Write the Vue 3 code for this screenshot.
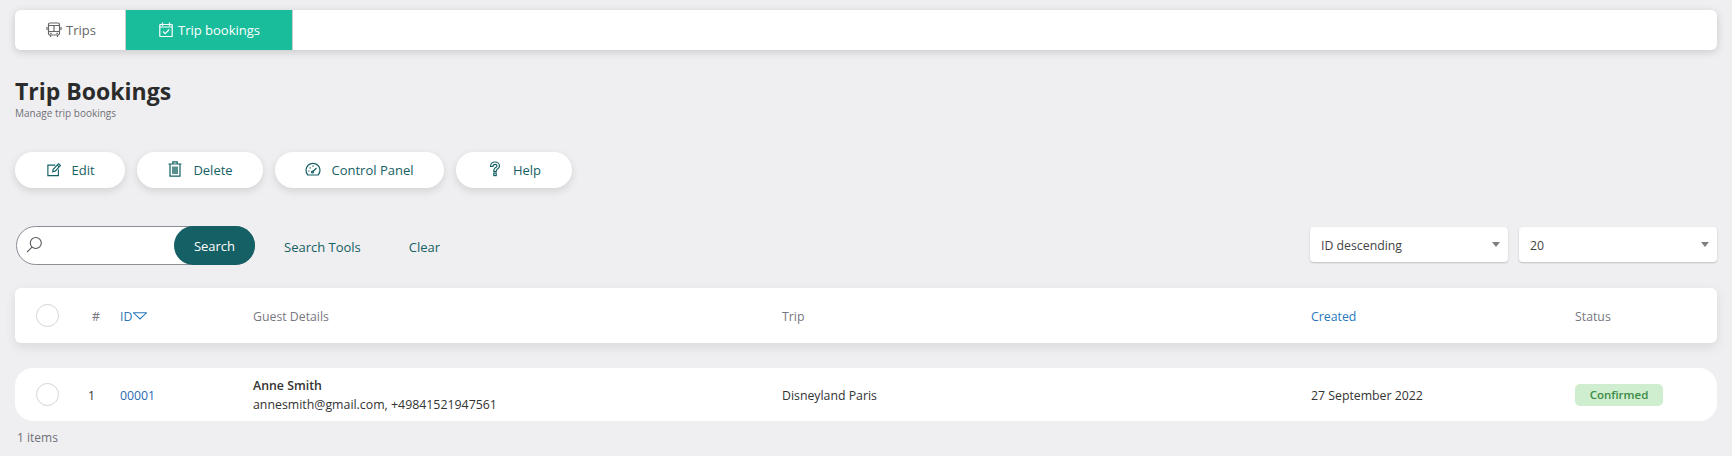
<script setup>
const headers = ['Guest Details', 'Trip']
</script>

<template>
  <div class="page">
    <nav class="tabs">
      <a class="tab tab-trips">
        <svg class="ico" viewBox="0 0 16 16" fill="none" stroke="currentColor" stroke-width="1.2">
          <rect x="2.500" y="1" width="11" height="12" rx="1.500"/>
          <path d="M2.500 3.500h11M2.500 9.500h11M8 3.500v6M1 5v3M15 5v3M4.500 13v2M11.500 13v2"/>
          <path d="M4.200 11.300h1.400M10.400 11.300h1.400"/>
        </svg>
        <span>Trips</span>
      </a>
      <a class="tab tab-active">
        <svg class="ico" viewBox="0 0 16 16" fill="none" stroke="currentColor" stroke-width="1.2">
          <rect x="1.800" y="2.500" width="12.400" height="12" rx="0.600"/>
          <path d="M4.500 0.500v3.500M11.500 0.500v3.500M1.800 5h12.400"/>
          <path d="M5 9.500l2.200 2.200 4-4.200"/>
        </svg>
        <span>Trip bookings</span>
      </a>
    </nav>

    <header class="title">
      <h1>Trip Bookings</h1>
      <p>Manage trip bookings</p>
    </header>

    <div class="actions">
      <button class="pill pill-edit">
        <svg class="ico ico-edit" viewBox="0 0 16 16" fill="none" stroke="currentColor" stroke-width="1.300">
          <path d="M9.500 2.500H1v12h12V7.500"/>
          <path d="M6.500 10l.6-2.800L13.200.8l2.100 2.100-6 6.400z"/>
          <path d="M11.800 2.400l2 2"/>
        </svg>
        <span>Edit</span>
      </button>
      <button class="pill pill-delete">
        <svg class="ico ico-up" viewBox="0 0 16 16" fill="none" stroke="currentColor" stroke-width="1.200">
          <path d="M1.500 3h13M3 3v12.200h10V3M5.800 3V.8h4.400V3"/>
          <path d="M6 5.500v7.500M8 5.500v7.500M10 5.500v7.500" stroke-width="1.400"/>
        </svg>
        <span>Delete</span>
      </button>
      <button class="pill pill-panel">
        <svg class="ico ico-gauge" viewBox="0 0 16 16" fill="none" stroke="currentColor" stroke-width="1.200">
          <path d="M2.800 13A7 7 0 1 1 13.200 13z"/>
          <path d="M7.500 10l4-4M3.200 9h1.300M8 3.500v1.300M4.800 5.500l.8.800"/>
          <circle cx="7.500" cy="10" r="1"/>
        </svg>
        <span>Control Panel</span>
      </button>
      <button class="pill pill-help">
        <svg class="ico ico-up" viewBox="0 0 16 16" fill="none" stroke="currentColor" stroke-width="1.200">
          <path d="M3.500 5.500C3.500 2.800 5.500 1 8 1s4.500 1.700 4.500 4c0 2.100-1.600 2.900-2.600 3.600-.6.500-.7 1-.7 1.900H6.800c0-1.600 0-2.500 1.100-3.400 1-.8 2.100-1.200 2.100-2.100 0-1-1-1.600-2-1.600S6 4.100 5.900 5.500z"/>
          <rect x="6.800" y="12" width="2.400" height="2.600"/>
        </svg>
        <span>Help</span>
      </button>
    </div>

    <div class="toolbar">
      <div class="search">
        <svg class="search-ico" viewBox="0 0 18 18" fill="none" stroke="#555" stroke-width="1.100">
          <circle cx="10.800" cy="7" r="5.500"/>
          <path d="M7 11.200l-5 5"/>
        </svg>
        <button class="search-btn">Search</button>
      </div>
      <a class="link link-tools">Search Tools</a>
      <a class="link link-clear">Clear</a>
      <div class="selects">
        <div class="select"><span>ID descending</span><i class="caret"></i></div>
        <div class="select"><span>20</span><i class="caret"></i></div>
      </div>
    </div>

    <div class="grid grid-head">
      <span class="check"></span>
      <span class="num">#</span>
      <span class="sort sort-id">ID<svg class="sort-ico" viewBox="0 0 14 8" fill="none" stroke="#2a78bb" stroke-width="1.100"><path d="M0.500 0.800h13L7 7z"/></svg></span>
      <span v-for="h in headers" :key="h">{{ h }}</span>
      <span class="sort">Created</span>
      <span>Status</span>
    </div>

    <div class="grid grid-row">
      <span class="check"></span>
      <span class="num-row">1</span>
      <span class="id-link">00001</span>
      <div class="guest">
        <strong>Anne Smith</strong>
        <span>annesmith@gmail.com, +49841521947561</span>
      </div>
      <span>Disneyland Paris</span>
      <span>27 September 2022</span>
      <span class="badge">Confirmed</span>
    </div>

    <p class="count">1 items</p>
  </div>
</template>

<style>
html, body { margin: 0; background: #efeff1; }
</style>

<style scoped>
.page {
  width: 1732px;
  height: 456px;
  box-sizing: border-box;
  padding: 10px 15px 0;
  font-family: "Open Sans", "Noto Sans", sans-serif;
  font-size: 12px;
  color: #333;
  overflow: hidden;
}
.ico { width: 16px; height: 16px; flex: none; }
.ico-up { margin-top: -3px; }
.ico-gauge { margin-top: -1px; }
.ico-edit { width: 14px; height: 14px; margin: -1px 0 0 2px; }
.tabs {
  display: flex;
  height: 40px;
  background: #fff;
  border-radius: 6px;
  overflow: hidden;
  box-shadow: 0 2px 8px rgba(0, 0, 0, 0.16);
}
.tab {
  display: flex;
  align-items: center;
  justify-content: center;
  gap: 4px;
  font-size: 13px;
  color: #666;
  box-sizing: border-box;
}
.tab svg { margin-top: -1px; }
.tab-trips { width: 111px; border-right: 1px solid #ccc; padding-left: 2px; }
.tab-active { width: 167px; background: #19bc9b; color: #fff; border-right: 1px solid #ccc; }
.title { margin-top: 25px; }
h1 { margin: 0; font-size: 23px; line-height: 32px; font-weight: 700; color: #2b2b2b; }
.title p { margin: 0; font-size: 10px; line-height: 13px; color: #6f6f78; }
.actions { display: flex; gap: 12px; margin-top: 32px; }
.pill {
  display: flex;
  align-items: center;
  justify-content: center;
  gap: 10px;
  height: 36px;
  border: 0;
  padding: 0;
  border-radius: 18px;
  background: #fff;
  color: #156064;
  font: inherit;
  font-size: 13px;
  box-shadow: 0 3px 8px rgba(0, 0, 0, 0.12);
}
.pill-edit { width: 110px; }
.pill-delete { width: 126px; }
.pill-panel { width: 169px; }
.pill-help { width: 116px; }
.toolbar { display: flex; align-items: center; margin-top: 38px; height: 39px; }
.search {
  position: relative;
  width: 239px;
  height: 39px;
  margin-left: 1px;
  box-sizing: border-box;
  border: 1px solid #8d8d95;
  border-radius: 20px;
  background: #fff;
}
.search-ico { position: absolute; left: 8px; top: 9px; width: 18px; height: 18px; }
.search-btn {
  position: absolute;
  right: -1px;
  top: -1px;
  width: 81px;
  height: 39px;
  border: 0;
  border-radius: 20px;
  background: #156064;
  color: #fff;
  font: inherit;
  font-size: 13px;
}
.link { font-size: 13px; color: #156064; margin-top: 3px; }
.link-tools { margin-left: 29px; }
.link-clear { margin-left: 48px; }
.selects { display: flex; gap: 11px; margin-left: auto; margin-top: -2px; }
.select {
  position: relative;
  display: flex;
  align-items: center;
  width: 198px;
  height: 35px;
  box-sizing: border-box;
  padding: 1px 0 0 11px;
  background: #fff;
  border-radius: 4px;
  font-size: 12.300px;
  color: #444;
  box-shadow: 0 1px 2px rgba(0, 0, 0, 0.2);
}
.caret {
  position: absolute;
  right: 8px;
  top: 15px;
  border-left: 4px solid transparent;
  border-right: 4px solid transparent;
  border-top: 5px solid #808080;
}
.grid {
  display: grid;
  grid-template-columns: 77px 29px 132px 529px 529px 264px 142px;
  align-items: center;
  background: #fff;
  font-size: 12.300px;
}
.grid > :not(.check):not(.guest):not(.badge) { padding-top: 2px; }
.grid-head {
  height: 55px;
  margin-top: 23px;
  border-radius: 6px;
  color: #77777f;
  box-shadow: 0 4px 12px rgba(0, 0, 0, 0.09);
}
.grid-row { height: 53px; margin-top: 25px; border-radius: 18px; color: #333; }
.check {
  width: 21px;
  height: 21px;
  margin-left: 21px;
  border: 1px solid #d4d4da;
  border-radius: 50%;
}
.sort { color: #2a78bb; display: flex; align-items: center; }
.sort-id { margin-left: -1px; }
.sort-ico { width: 14px; height: 8px; margin: -2px 0 0 1px; }
.id-link { color: #2a6ab0; margin-left: -1px; }
.num-row { margin-left: -4px; }
.guest { display: flex; flex-direction: column; gap: 2px; line-height: 17px; font-size: 12.350px; }
.guest strong { font-weight: 600; color: #333; }
.badge {
  width: 88px;
  height: 22px;
  line-height: 22px;
  text-align: center;
  border-radius: 5px;
  background: #cfeecf;
  color: #3a8a45;
  font-size: 11.500px;
  font-weight: 600;
}
.count { margin: 9px 0 0 2px; font-size: 12px; line-height: 16px; color: #6f6f78; }
</style>
